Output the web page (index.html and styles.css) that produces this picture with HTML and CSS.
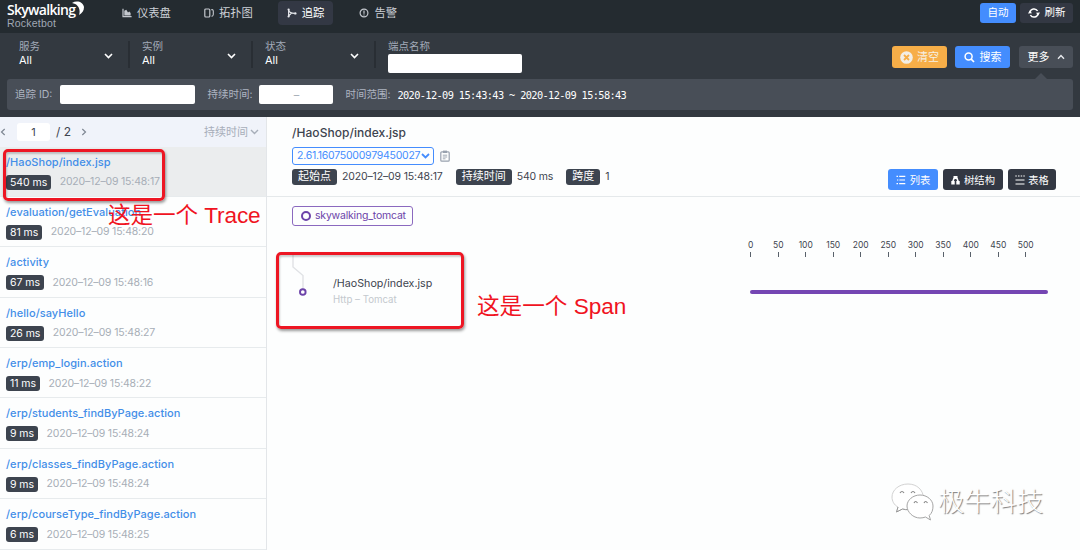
FILE: index.html
```
<!DOCTYPE html>
<html lang="zh-CN">
<head>
    <meta charset="utf-8">
    <title>Skywalking Rocketbot</title>
    <link rel="stylesheet" href="styles.css">
</head>
<body>
    <!-- Top navigation -->
    <header class="topbar">
        <div class="logo">
            <div class="logo-name">Skywalking</div>
            <svg class="logo-moon" width="14" height="16" viewBox="0 0 14 16"><path d="M0 2C5-1 11 1 12 6c0 4-2 6-5 8C9 8 6 3 0 2z" fill="#fff"/></svg>
            <div class="logo-sub">Rocketbot</div>
        </div>
        <nav class="nav">
            <a class="nav-item nav-dashboard">
                <svg width="10" height="10" viewBox="0 0 10 10"><path d="M1 0.8V8.6H9.6" fill="none" stroke="#c3c7cd" stroke-width="1.2"/><path d="M2.3 7.5V2.8L4.3 1.8 6 4.4 7.3 3.6 8.6 5V7.5z" fill="#c3c7cd"/></svg>
                <span>仪表盘</span>
            </a>
            <a class="nav-item nav-topology">
                <svg width="10" height="10" viewBox="0 0 10 10"><rect x="0.8" y="1" width="5" height="8" rx="1" fill="none" stroke="#c3c7cd" stroke-width="1.2"/><path d="M7.3 1.6H8.2Q9.3 1.8 9.3 3V6.5Q9.2 8 7.6 8.4" fill="none" stroke="#c3c7cd" stroke-width="1.1"/></svg>
                <span>拓扑图</span>
            </a>
            <a class="nav-item nav-trace active">
                <svg width="10" height="10" viewBox="0 0 10 10"><path d="M1.6 1V9M1.8 2.2C2.2 4.8 4 5.4 7.6 5.4M1.8 7.8 4.5 5" fill="none" stroke="#e8eaee" stroke-width="1.1"/><circle cx="1.6" cy="1.5" r="1.1" fill="#e8eaee"/><circle cx="1.6" cy="8.5" r="1.1" fill="#e8eaee"/><circle cx="8.3" cy="5.4" r="1.2" fill="#e8eaee"/></svg>
                <span>追踪</span>
            </a>
            <a class="nav-item nav-alarm">
                <svg width="10" height="10" viewBox="0 0 10 10"><circle cx="5" cy="5" r="3.9" fill="none" stroke="#c3c7cd" stroke-width="1.2"/><path d="M5 2.6V5.7M5 6.4V7.4" stroke="#c3c7cd" stroke-width="1.2"/></svg>
                <span>告警</span>
            </a>
        </nav>
        <div class="top-actions">
            <button class="btn btn-auto">自动</button>
            <button class="btn btn-reload">
                <svg width="12" height="12" viewBox="0 0 12 12"><path d="M2 5.2A4.1 4.1 0 0 1 9.6 4M10 6.8A4.1 4.1 0 0 1 2.4 8" fill="none" stroke="#fff" stroke-width="1.5"/><path d="M0 6.5 1.8 3.6 4 6.2zM12 5.5 10.2 8.4 8 5.8z" fill="#fff"/></svg>
                <span>刷新</span>
            </button>
        </div>
    </header>

    <!-- Search conditions -->
    <section class="search">
        <div class="filters">
            <div class="filter">
                <div>
                    <div class="filter-label">服务</div>
                    <div class="filter-value">All</div>
                </div>
                <svg class="arrow" width="9" height="6" viewBox="0 0 9 6"><path d="M1 1 4.5 4.5 8 1" fill="none" stroke="#fff" stroke-width="1.6"/></svg>
            </div>
            <div class="filter">
                <div>
                    <div class="filter-label">实例</div>
                    <div class="filter-value">All</div>
                </div>
                <svg class="arrow" width="9" height="6" viewBox="0 0 9 6"><path d="M1 1 4.5 4.5 8 1" fill="none" stroke="#fff" stroke-width="1.6"/></svg>
            </div>
            <div class="filter">
                <div>
                    <div class="filter-label">状态</div>
                    <div class="filter-value">All</div>
                </div>
                <svg class="arrow" width="9" height="6" viewBox="0 0 9 6"><path d="M1 1 4.5 4.5 8 1" fill="none" stroke="#fff" stroke-width="1.6"/></svg>
            </div>
            <div class="endpoint">
                <div class="filter-label">端点名称</div>
                <input class="field field-endpoint" type="text">
            </div>
            <div class="search-actions">
                <button class="btn btn-clear">
                    <svg width="13" height="13" viewBox="0 0 13 13"><circle cx="6.5" cy="6.5" r="6.3" fill="#f3eee5"/><path d="M4 4 9 9M9 4 4 9" stroke="#f7ae48" stroke-width="1.8"/></svg>
                    <span>清空</span>
                </button>
                <button class="btn btn-search">
                    <svg width="11" height="11" viewBox="0 0 11 11"><circle cx="4.6" cy="4.6" r="3.5" fill="none" stroke="#fff" stroke-width="1.5"/><path d="M7.2 7.2 10 10" stroke="#fff" stroke-width="1.7"/></svg>
                    <span>搜索</span>
                </button>
                <button class="btn btn-more">
                    <span>更多</span>
                    <svg width="8" height="6" viewBox="0 0 8 6"><path d="M1 4.7 4 1.5 7 4.7" fill="none" stroke="#e8eaee" stroke-width="1.4"/></svg>
                </button>
            </div>
        </div>
        <div class="more-panel">
            <label class="more-label" for="traceId">追踪 ID:</label>
            <input class="field field-trace" id="traceId" type="text">
            <span class="more-label">持续时间:</span>
            <div class="field field-duration">–</div>
            <span class="more-label">时间范围:</span>
            <span class="range">2020-12-09 15:43:43 ~ 2020-12-09 15:58:43</span>
        </div>
    </section>

    <main class="content">
        <!-- Trace list -->
        <aside class="traces">
            <div class="pager">
                <svg width="6" height="8" viewBox="0 0 6 8"><path d="M4.7 1 1.5 4 4.7 7" fill="none" stroke="#7f8793" stroke-width="1.2"/></svg>
                <span class="page-now">1</span>
                <span class="page-total">/ 2</span>
                <svg width="6" height="8" viewBox="0 0 6 8"><path d="M1.3 1 4.5 4 1.3 7" fill="none" stroke="#7f8793" stroke-width="1.2"/></svg>
                <span class="sort">持续时间</span>
                <svg width="9" height="6" viewBox="0 0 9 6"><path d="M1 1 4.5 4.5 8 1" fill="none" stroke="#a7aeb9" stroke-width="1.4"/></svg>
            </div>
            <div class="trace selected">
                <div class="trace-name">/HaoShop/index.jsp</div>
                <div class="trace-info"><span class="tag">540 ms</span><span class="time">2020–12–09 15:48:17</span></div>
            </div>
            <div class="trace">
                <div class="trace-name">/evaluation/getEvaluation</div>
                <div class="trace-info"><span class="tag">81 ms</span><span class="time">2020–12–09 15:48:20</span></div>
            </div>
            <div class="trace">
                <div class="trace-name">/activity</div>
                <div class="trace-info"><span class="tag">67 ms</span><span class="time">2020–12–09 15:48:16</span></div>
            </div>
            <div class="trace">
                <div class="trace-name">/hello/sayHello</div>
                <div class="trace-info"><span class="tag">26 ms</span><span class="time">2020–12–09 15:48:27</span></div>
            </div>
            <div class="trace">
                <div class="trace-name">/erp/emp_login.action</div>
                <div class="trace-info"><span class="tag">11 ms</span><span class="time">2020–12–09 15:48:22</span></div>
            </div>
            <div class="trace">
                <div class="trace-name">/erp/students_findByPage.action</div>
                <div class="trace-info"><span class="tag">9 ms</span><span class="time">2020–12–09 15:48:24</span></div>
            </div>
            <div class="trace">
                <div class="trace-name">/erp/classes_findByPage.action</div>
                <div class="trace-info"><span class="tag">9 ms</span><span class="time">2020–12–09 15:48:24</span></div>
            </div>
            <div class="trace">
                <div class="trace-name">/erp/courseType_findByPage.action</div>
                <div class="trace-info"><span class="tag">6 ms</span><span class="time">2020–12–09 15:48:25</span></div>
            </div>
        </aside>

        <!-- Trace detail -->
        <section class="detail">
            <div class="detail-head">
                <div class="detail-main">
                    <div class="detail-title">/HaoShop/index.jsp</div>
                    <div class="detail-id">
                        <div class="id-select">
                            <span>2.61.16075000979450027</span>
                            <svg width="9" height="6" viewBox="0 0 9 6"><path d="M1 1 4.5 4.5 8 1" fill="none" stroke="#448dfe" stroke-width="1.8"/></svg>
                        </div>
                        <svg width="10" height="12" viewBox="0 0 10 12"><rect x="0.8" y="1.8" width="8.4" height="9.4" rx="1" fill="none" stroke="#98a1ae" stroke-width="1.2"/><path d="M3 0.6H7V3H3z" fill="#98a1ae"/><path d="M2.8 5.2H7.2M2.8 7H7.2M2.8 8.8H5.5" stroke="#98a1ae" stroke-width="0.9"/></svg>
                    </div>
                    <div class="detail-info">
                        <span class="tag">起始点</span><span class="info-value">2020–12–09 15:48:17</span>
                        <span class="tag">持续时间</span><span class="info-value">540 ms</span>
                        <span class="tag">跨度</span><span class="info-value">1</span>
                    </div>
                </div>
                <div class="views">
                    <button class="btn btn-view active">
                        <svg width="10" height="10" viewBox="0 0 10 10"><path d="M0.5 1.4H2M3.2 1.4H9.3M1 5H2.3M3.4 5H9M0.5 8.6H2M3.2 8.6H9.3" stroke="#fff" stroke-width="1.1"/></svg>
                        <span>列表</span>
                    </button>
                    <button class="btn btn-view btn-tree">
                        <svg width="9" height="10" viewBox="0 0 9 10"><path d="M2.5 1H6.500V4H2.500zM0.300 6H3.700V9.400H0.300zM5.300 6H8.700V9.400H5.300z" fill="#fff"/><path d="M3.200 3 1.600 7M5.800 3 7.400 7" stroke="#fff" stroke-width="1.600"/></svg>
                        <span>树结构</span>
                    </button>
                    <button class="btn btn-view btn-table">
                        <svg width="10" height="10" viewBox="0 0 10 10"><path d="M0.3 1H1.8M3 1H4.5M5.7 1H7.2M8.3 1H9.8M0.5 5H9.5M0.5 9H9.5" stroke="#fff" stroke-width="1.2"/></svg>
                        <span>表格</span>
                    </button>
                </div>
            </div>
            <div class="detail-body">
                <div class="service"><span class="service-dot"></span>skywalking_tomcat</div>
                <div class="chart">
                    <div class="span-node">
                        <svg width="26" height="44" viewBox="0 0 26 44"><path d="M1 0V12L11 20.5V34" fill="none" stroke="#e0e2e5" stroke-width="1.4"/><circle cx="10.8" cy="37" r="2.8" fill="#fff" stroke="#6c43a9" stroke-width="1.9"/></svg>
                        <div class="span-text">
                            <div class="span-name">/HaoShop/index.jsp</div>
                            <div class="span-type">Http – Tomcat</div>
                        </div>
                    </div>
                    <div class="timeline">
                        <div class="axis">
                            <span>0</span><span>50</span><span>100</span><span>150</span><span>200</span><span>250</span><span>300</span><span>350</span><span>400</span><span>450</span><span>500</span>
                        </div>
                        <div class="bar"></div>
                    </div>
                </div>
            </div>
        </section>
    </main>

    <!-- Annotations over the page -->
    <div class="mark mark-trace"></div>
    <div class="note note-trace">这是一个 Trace</div>
    <div class="mark mark-span"></div>
    <div class="note note-span">这是一个 Span</div>
    <div class="watermark">
        <svg width="44" height="38" viewBox="0 0 44 38"><path d="M17 1C8 1 1 7 1 14c0 4 2 8 6 10l-1.5 5 6-3c2 .6 4 .8 6 .6 9 0 15-5 15-12C32 7 26 1 17 1z" fill="#fff" stroke="#d2d2d2"/><path d="M7 24l-1.500 5 6-3c2 .6 4 .8 6 .6" fill="none" stroke="#999"/><path d="M29 12c-7 0-13 5-13 11s6 12 13 12c2 0 4-.4 5.5-1l5 3-1.3-4.500C41 30 42 27 42 23c0-6-6-11-13-11z" fill="#fff" stroke="#a5a5a5"/><path d="M9 10q2-3 4 0M20 10q2-3 4 0M23 20q1.5-3 3.5 0M33 20q1.5-3 3.5 0" fill="none" stroke="#888" stroke-width="1.2"/></svg>
        <span>极牛科技</span>
    </div>
</body>
</html>
```
FILE: styles.css
```
* {
    box-sizing: border-box;
}
body {
    margin: 0;
    height: 550px;
    overflow: hidden;
    background-color: #fdfefe;
    color: #3d444f;
    font-family: Inter, "Noto Sans CJK SC", sans-serif;
    font-size: 11px;
    line-height: 14px;
}
svg {
    display: block;
    flex: none;
}
button, input {
    font: inherit;
}
.btn {
    display: flex;
    align-items: center;
    justify-content: center;
    padding: 0;
    border: none;
    border-radius: 3px;
    color: #fff;
    background-color: #333843;
}

/* top bar */
.topbar {
    display: flex;
    height: 33px;
    background-color: #242b30;
}
.logo {
    position: relative;
    width: 114px;
    padding: 1px 0 0 7px;
}
.logo-name {
    height: 17px;
    color: #fff;
    font-family: "Open Sans", sans-serif;
    font-size: 14px;
    font-weight: 600;
    line-height: 18px;
    letter-spacing: -0.7px;
}
.logo-moon {
    position: absolute;
    left: 72px;
    top: 1px;
}
.logo-sub {
    color: #a0a8b5;
    font-family: "Liberation Sans", sans-serif;
    font-size: 10.5px;
    line-height: 11px;
    letter-spacing: 0.2px;
}
.nav {
    display: flex;
    padding-top: 1px;
    gap: 13px;
    font-size: 11.3px;
}
.nav-item {
    display: flex;
    align-items: center;
    height: 24px;
    padding: 0 8px;
    gap: 5px;
    border-radius: 4px;
    color: #ccd0d6;
}
.nav-topology {
    margin-left: 4px;
}
.nav-trace {
    margin-left: 4px;
    padding: 0 9px;
}
.nav-alarm {
    margin-left: 5px;
}
.nav-item.active {
    color: #fff;
    background-color: #333844;
}
.top-actions {
    display: flex;
    gap: 4px;
    margin-left: auto;
    padding: 3px 7px 0 0;
}
.top-actions .btn {
    height: 20px;
    font-size: 10.5px;
}
.btn-auto {
    width: 36px;
    background-color: #448dfe;
}
.btn-reload {
    width: 53px;
    gap: 5px;
}

/* search conditions */
.search {
    height: 84px;
    padding: 0 7px;
    background-color: #333940;
}
.filters {
    display: flex;
    height: 46px;
    padding-top: 8px;
}
.filter {
    display: flex;
    justify-content: space-between;
    width: 123px;
    height: 27px;
    padding: 0 15px 0 12px;
    border-right: 2px solid #292e34;
}
.filter-label {
    color: #a2aab8;
    font-size: 10.5px;
    line-height: 12px;
}
.filter-value {
    color: #fff;
    line-height: 15px;
}
.arrow {
    margin-top: 12px;
}
.endpoint {
    padding-left: 12px;
}
.field {
    display: block;
    border: none;
    border-radius: 2px;
    background-color: #fff;
}
.field-endpoint {
    width: 134px;
    height: 19px;
    margin-top: 1px;
}
.search-actions {
    display: flex;
    margin-left: auto;
    padding-top: 5px;
}
.search-actions .btn {
    height: 22px;
}
.btn-clear {
    width: 55px;
    gap: 4px;
    margin-right: 8px;
    color: #f6f0e4;
    background-color: #f7ae48;
}
.search-actions .btn-search {
    width: 55px;
    gap: 5px;
    margin-right: 9px;
    background-color: #448dfe;
}
.btn-more {
    position: relative;
    width: 54px;
    gap: 7px;
    background-color: #484e57;
}
.btn-more::after {
    content: "";
    position: absolute;
    left: 16px;
    top: 27px;
    border: 6px solid transparent;
    border-top: none;
    border-bottom-color: #484e57;
}
.more-panel {
    display: flex;
    align-items: center;
    height: 31px;
    padding-left: 8px;
    border-radius: 3px;
    background-color: #484e57;
}
.more-label {
    color: #adb4c1;
    font-size: 10.5px;
}
.field-trace {
    width: 135px;
    height: 19px;
    margin: 0 12px 0 8px;
}
.field-duration {
    width: 74px;
    height: 19px;
    margin: 0 12px 0 7px;
    color: #a8afb8;
    line-height: 20px;
    text-align: center;
}
.range {
    margin-left: 7px;
    color: #fff;
    font-family: "DejaVu Sans Mono", monospace;
    font-size: 10.3px;
    letter-spacing: -0.62px;
}

/* trace list */
.content {
    display: flex;
    height: 433px;
}
.traces {
    width: 267px;
    border-right: 1px solid #e3e6e9;
}
.pager {
    display: flex;
    align-items: center;
    height: 29.5px;
    padding-right: 7px;
    background-color: #f0f3fa;
    color: #3d444f;
}
.page-now {
    width: 33px;
    height: 18px;
    margin: 1px 6px 0 11px;
    border-radius: 3px;
    background-color: #fff;
    line-height: 18px;
    text-align: center;
}
.page-total {
    margin-right: 10px;
    font-size: 12px;
}
.sort {
    margin: 0 2px 0 auto;
    color: #a7aeb9;
}
.trace {
    height: 50.38px;
    padding: 8px 0 0 6px;
    border-bottom: 1px solid #e7ebed;
}
.trace.selected {
    background-color: #ebedee;
}
.trace-name {
    color: #438ee8;
    font-weight: 500;
    line-height: 15px;
    letter-spacing: 0.05px;
}
.trace-info {
    display: flex;
    align-items: center;
    margin-top: 5px;
}
.tag {
    height: 15px;
    padding: 0 4.5px;
    border-radius: 3px;
    background-color: #3d444f;
    color: #fff;
    font-size: 10.5px;
    line-height: 15px;
}
.trace-info .tag {
    padding: 0 4px;
    letter-spacing: -0.05px;
}
.time {
    margin-left: 8.5px;
    color: #a7aeb7;
    font-size: 10.5px;
    letter-spacing: -0.18px;
}

/* trace detail */
.detail {
    flex: 1;
}
.detail-head {
    display: flex;
    justify-content: space-between;
    height: 80px;
    padding: 9px 24px 0 25px;
    border-bottom: 1px solid #e5e9eb;
}
.detail-title {
    font-size: 12px;
    font-weight: 500;
    letter-spacing: 0.05px;
}
.detail-id {
    display: flex;
    align-items: center;
    gap: 6px;
    margin-top: 7px;
}
.id-select {
    display: flex;
    align-items: center;
    justify-content: space-between;
    width: 142px;
    height: 18px;
    padding: 0 3px 0 4px;
    border: 1px solid #448dfe;
    border-radius: 3px;
    color: #448dfe;
    font-size: 10.5px;
    letter-spacing: -0.25px;
}
.detail-info {
    display: flex;
    align-items: center;
    margin-top: 4px;
    font-size: 10.5px;
    letter-spacing: -0.15px;
}
.detail-info .tag {
    height: 16px;
    padding: 0 6px;
    font-size: 11px;
    letter-spacing: 0;
}
.info-value {
    margin: 0 13px 0 5px;
}
.views {
    display: flex;
    gap: 5px;
    margin-top: 43px;
}
.btn-view {
    width: 50px;
    height: 21px;
    gap: 4px;
    font-size: 10.3px;
}
.btn-tree {
    width: 60px;
}
.btn-table {
    width: 48px;
    gap: 3px;
}
.btn-view.active {
    background-color: #448dfe;
}
.detail-body {
    padding: 9px 0 0 25px;
}
.service {
    display: flex;
    align-items: center;
    width: 121px;
    height: 20px;
    padding-left: 8px;
    gap: 4px;
    border: 1px solid #8b69bf;
    border-radius: 3px;
    color: #6c43a9;
    font-size: 10.5px;
    letter-spacing: -0.2px;
}
.service-dot {
    width: 10px;
    height: 10px;
    border: 2px solid #6c43a9;
    border-radius: 50%;
}
.chart {
    display: flex;
}
.span-node {
    display: flex;
    gap: 15px;
    width: 445px;
    padding-top: 29px;
}
.span-text {
    padding-top: 21px;
}
.span-name {
    font-size: 10.7px;
    line-height: 15px;
}
.span-type {
    color: #c4c9ce;
    font-size: 9.7px;
    line-height: 17px;
}
.timeline {
    width: 312px;
    padding-top: 14px;
}
.axis {
    display: flex;
    font-size: 8.5px;
    line-height: 11px;
}
.axis span {
    width: 27.5px;
    text-align: center;
}
.axis span::after {
    content: "";
    display: block;
    width: 1px;
    height: 5px;
    margin: 1px auto 0;
    background-color: #59616b;
}
.bar {
    width: 298px;
    height: 4px;
    margin: 33px 0 0 13px;
    border-radius: 2px;
    background-color: #7546b3;
}

/* annotations */
.mark {
    position: absolute;
    border: 3px solid #ed1623;
    border-radius: 5px;
    box-shadow: 1px 2px 3px rgba(0, 0, 0, 0.4), inset 1px 2px 2px rgba(0, 0, 0, 0.2);
}
.mark-trace {
    left: 3px;
    top: 149px;
    width: 162px;
    height: 52px;
}
.mark-span {
    left: 276px;
    top: 252px;
    width: 188px;
    height: 77px;
}
.note {
    position: absolute;
    color: #f01322;
    font-family: "Liberation Sans", "Noto Sans CJK SC", sans-serif;
    font-size: 22.6px;
    line-height: 28px;
    white-space: nowrap;
}
.note-trace {
    left: 108px;
    top: 202px;
    letter-spacing: -0.1px;
}
.note-span {
    left: 477px;
    top: 293px;
}
.watermark {
    position: absolute;
    display: flex;
    align-items: center;
    gap: 3px;
    left: 891px;
    top: 483px;
    color: #fff;
    font-size: 26.3px;
    font-weight: 300;
    line-height: 38px;
    text-shadow: 1px 1px 1px #777;
}
```
